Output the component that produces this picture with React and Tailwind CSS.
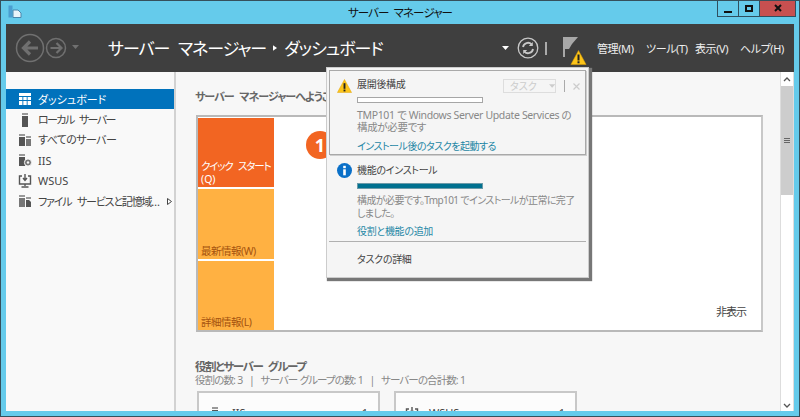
import React from "react";

const Warn = ({ cls }) => (
  <svg viewBox="0 0 16 15" className={cls}>
    <path d="M8 .5 15.6 14.5H.4Z" fill="#fcc419" stroke="#e0a000" strokeWidth="0.5" />
    <rect x="7" y="4.5" width="2" height="6" fill="#222" />
    <rect x="7" y="11.3" width="2" height="2" fill="#222" />
  </svg>
);

const SideIcon = ({ kind }) => {
  const c = kind === "dash" ? "#ffffff" : "#555555";
  return (
    <svg viewBox="0 0 14 14" className="w-[14px] h-[14px] shrink-0">
      {kind === "dash" && (
        <g fill={c}>
          <rect x="1" y="1" width="12" height="3" />
          <rect x="1" y="5" width="3.4" height="3" />
          <rect x="5.3" y="5" width="3.4" height="3" />
          <rect x="9.6" y="5" width="3.4" height="3" />
          <rect x="1" y="9" width="3.4" height="4" />
          <rect x="5.3" y="9" width="3.4" height="4" />
          <rect x="9.6" y="9" width="3.4" height="4" />
        </g>
      )}
      {kind === "local" && (
        <g fill={c}>
          <rect x="4" y="0" width="6" height="2" fill="#999" />
          <rect x="4" y="3" width="6" height="11" />
        </g>
      )}
      {kind === "all" && (
        <g>
          <rect x="1" y="1" width="6" height="2" fill="#999" />
          <rect x="1" y="4" width="6" height="9" fill={c} />
          <rect x="8" y="3" width="5" height="2" fill="#999" />
          <rect x="8" y="6" width="5" height="7" fill="#777" />
        </g>
      )}
      {kind === "iis" && (
        <g>
          <rect x="1" y="1" width="6" height="2" fill="#999" />
          <rect x="1" y="4" width="6" height="9" fill={c} />
          <circle cx="10" cy="9.5" r="3.6" fill="#777" stroke="#f9f9f9" />
          <circle cx="10" cy="9.5" r="1.2" fill="#f9f9f9" />
        </g>
      )}
      {kind === "wsus" && (
        <g fill="none" stroke={c} strokeWidth="1.4">
          <path d="M4 2H1.5v8h11V2H10" />
          <path d="M7 0v6M5 4l2 2.4L9 4" />
          <path d="M7 10v2M3.5 13h7" />
        </g>
      )}
      {kind === "file" && (
        <g>
          <rect x="1" y="1" width="6" height="2" fill="#999" />
          <rect x="1" y="4" width="6" height="9" fill="#777" />
          <rect x="8" y="3" width="5" height="2" fill="#999" />
          <path d="M8 6h3l2 2v5H8Z" fill={c} />
        </g>
      )}
    </svg>
  );
};

const navItems = [
  ["dash", "ダッシュボード", "tracking-[0px]", true],
  ["local", "ローカル サーバー", "tracking-[-1.6px] [word-spacing:4px]"],
  ["all", "すべてのサーバー", "tracking-[-0.6px]"],
  ["iis", "IIS", "tracking-[0px]"],
  ["wsus", "WSUS", "tracking-[0px]"],
  ["file", "ファイル サービスと記憶域…", "tracking-[-1.2px] [word-spacing:4px]"],
];

export default function App() {
  return (
    <div className="relative w-[800px] h-[417px] overflow-hidden flex flex-col bg-[#65cbeb] border border-[#35505c] font-['Noto_Sans','Noto_Sans_CJK_JP',sans-serif] [font-feature-settings:'palt']">
      {/* title bar */}
      <div className="h-[23px] shrink-0 relative flex items-center justify-center">
        <svg viewBox="0 0 14 13" className="absolute left-[7px] top-[4px] w-[14px] h-[13px]">
          <rect x="0.5" y="0.5" width="4" height="12" fill="#4a9ed0" />
          <path d="M5 5h5l3 3v4.5H5Z" fill="#e8f4fa" stroke="#4a86ac" />
        </svg>
        <span className="text-[11.5px] text-[#111] leading-none tracking-[-0.9px] [word-spacing:3px]">サーバー マネージャー</span>
        <div className="absolute top-[-1px] left-[716px] flex h-[17px] border border-t-0 border-[#2f4f5f]">
          <div className="w-[21px] border-r border-[#2f4f5f] flex items-end justify-center pb-[3px]">
            <div className="w-[8px] h-[2px] bg-[#111]" />
          </div>
          <div className="w-[20px] flex items-center justify-center">
            <div className="w-[8px] h-[7px] border-2 border-[#111]" />
          </div>
          <div className="w-[36px] bg-[#c75050] flex items-center justify-center border-l border-[#2f4f5f]">
            <svg viewBox="0 0 8 8" className="w-[8px] h-[8px]"><path d="M1 1l6 6M7 1l-6 6" stroke="#111" strokeWidth="2" /></svg>
          </div>
        </div>
      </div>

      <div className="mx-[5px] flex-1 flex flex-col min-h-0">
        {/* header */}
        <div className="h-[48px] shrink-0 bg-[#3f3f3f] flex items-center">
          <svg viewBox="0 0 76 32" className="ml-[8px] w-[76px] h-[32px] shrink-0">
            <g fill="none" stroke="#707070">
              <circle cx="16" cy="16" r="13.5" strokeWidth="1.5" />
              <circle cx="42" cy="16" r="9.5" strokeWidth="1.5" />
              <path d="M24 16H10M16 9.5 9.5 16l6.5 6.5" strokeWidth="3.2" />
              <path d="M36.5 16H47M42.5 11l5 5-5 5" strokeWidth="2.2" />
            </g>
            <path d="M58 13h7l-3.5 4Z" fill="#707070" />
          </svg>
          <div className="ml-[18px] flex items-center text-[17px] tracking-[-1px] [word-spacing:5px] text-white leading-none whitespace-nowrap">
            <span>サーバー マネージャー</span>
            <svg viewBox="0 0 5 7" className="w-[4px] h-[6px] mx-[7px]"><path d="M0 0l5 3.5L0 7Z" fill="#fff" /></svg>
            <span>ダッシュボード</span>
          </div>
          <div className="flex-1" />
          <svg viewBox="0 0 7 4" className="w-[7px] h-[4px] mr-[8px]"><path d="M0 0h7L3.5 4Z" fill="#fff" /></svg>
          <svg viewBox="0 0 22 22" className="w-[22px] h-[22px]">
            <circle cx="11" cy="11" r="9.8" fill="none" stroke="#c8c8c8" strokeWidth="1.3" />
            <path d="M6 10a5 5 0 0 1 8.6-2.6M16 12a5 5 0 0 1-8.6 2.6" fill="none" stroke="#c8c8c8" strokeWidth="1.8" />
            <path d="M15.8 5v4h-4ZM6.2 17v-4h4Z" fill="#c8c8c8" />
          </svg>
          <div className="ml-[6px] w-[2px] h-[13px] bg-[#aaaaaa]" />
          <div className="relative ml-[16px] mt-[6px] w-[24px] h-[28px]">
            <svg viewBox="0 0 15 20" className="absolute left-0 top-0 w-[15px] h-[20px]">
              <rect x="0" y="0" width="2" height="20" fill="#a8a8a8" />
              <path d="M2 0h13l-6 7 -3 5H2Z" fill="#a8a8a8" />
            </svg>
            <Warn cls="absolute left-[7px] top-[13px] w-[17px] h-[15px]" />
          </div>
          <div className="ml-[10px] mr-[17px] flex text-[11px] tracking-[-0.4px] text-[#eeeeee] leading-none whitespace-nowrap">
            <span className="w-[49px]">管理(M)</span>
            <span className="w-[49px]">ツール(T)</span>
            <span className="w-[45px]">表示(V)</span>
            <span className="w-[37px]">ヘルプ(H)</span>
          </div>
        </div>

        <div className="flex-1 flex min-h-0 overflow-hidden">
          {/* sidebar */}
          <div className="w-[170px] shrink-0 bg-[#f9f9f9] border-r-2 border-[#d2d2d2] pt-[17px]">
            {navItems.map(([k, t, tr, sel]) => (
              <div key={k} className={`h-[20.4px] flex items-center pl-[12px] text-[11px] leading-none whitespace-nowrap ${tr} ${sel ? "bg-[#0072bc] text-white" : "text-[#444444]"}`}>
                <SideIcon kind={k} />
                <span className="ml-[6px]">{t}</span>
                {k === "file" && (
                  <svg viewBox="0 0 5 7" className="w-[5px] h-[7px] ml-[8px]"><path d="M.5.5l4 3-4 3Z" fill="#fff" stroke="#444" /></svg>
                )}
              </div>
            ))}
          </div>

          {/* content */}
          <div className="flex-1 min-w-0 bg-[#f7f7f7] pl-[19px] pt-[18px] overflow-hidden">
            <div className="h-[14px] text-[11px] tracking-[-1px] [word-spacing:4px] font-bold text-[#666666] leading-[14px] whitespace-nowrap">サーバー マネージャーへようこそ</div>
            <div className="mt-[11px] ml-[1px] w-[567px] h-[217px] border-2 border-[#b9b9b9] border-r-[#c8c8c8] bg-white flex">
              <div className="w-[76px] flex flex-col shrink-0 gap-[2px] pt-[1px]">
                <div className="h-[70px] bg-[#f26522] text-white text-[10.5px] tracking-[-1.2px] [word-spacing:4px] leading-[13px] px-[3px] pb-[1px] flex flex-col justify-end whitespace-nowrap">
                  <span>クイック スタート</span>
                  <span className="tracking-[0px]">(Q)</span>
                </div>
                <div className="h-[70px] bg-[#ffb142] text-[#a5530f] text-[10.5px] tracking-[-0.5px] leading-[13px] px-[3px] pb-[1px] flex flex-col justify-end whitespace-nowrap">
                  <span>最新情報(W)</span>
                </div>
                <div className="h-[70px] bg-[#ffb142] text-[#a5530f] text-[10.5px] tracking-[-0.5px] leading-[13px] px-[3px] pb-[1px] flex flex-col justify-end whitespace-nowrap">
                  <span>詳細情報(L)</span>
                </div>
              </div>
              <div className="flex-1 flex flex-col pl-[32px] pt-[14px] pr-[15px] pb-[13px]">
                <div className="w-[28px] h-[28px] rounded-full bg-[#f26522] text-white text-[18px] font-bold flex items-center justify-center leading-none">1</div>
                <div className="flex-1" />
                <div className="self-end text-[11px] tracking-[-1px] text-[#444444] leading-none">非表示</div>
              </div>
            </div>
            <div className="mt-[28px] text-[11.5px] tracking-[-1.4px] [word-spacing:4px] font-bold text-[#666666] leading-[14px] whitespace-nowrap">役割とサーバー グループ</div>
            <div className="text-[10.5px] tracking-[-0.9px] [word-spacing:0.4px] text-[#888888] leading-[13px] whitespace-pre">{"役割の数: 3   |   サーバー グループの数: 1   |   サーバーの合計数: 1"}</div>
            <div className="mt-[4px] ml-[2px] flex gap-[14px]">
              {[["IIS", "local"], ["WSUS", "wsus"]].map(([n, k]) => (
                <div key={n} className="w-[183px] h-[40px] shrink-0 border-2 border-[#c8c8c8] bg-[#fcfcfc] flex items-start pl-[9px] pr-[10px] pt-[14px] text-[11px] text-[#444444] leading-none">
                  <SideIcon kind={k} />
                  <span className="ml-[10px] flex-1">{n}</span>
                  <span>1</span>
                </div>
              ))}
            </div>
          </div>

          {/* scrollbar */}
          <div className="w-[14px] shrink-0 bg-white border-x border-[#dddddd] flex flex-col">
            <div className="h-[14px] flex items-center justify-center">
              <svg viewBox="0 0 8 5" className="w-[8px] h-[5px]"><path d="M1 4l3-3 3 3" fill="none" stroke="#555" strokeWidth="1.3" /></svg>
            </div>
            <div className="h-[109px] bg-[#cdcdcd] flex flex-col items-center justify-center gap-[1px]">
              <div className="w-[6px] h-px bg-[#666]" />
              <div className="w-[6px] h-px bg-[#666]" />
              <div className="w-[6px] h-px bg-[#666]" />
            </div>
            <div className="flex-1" />
            <div className="h-[12px] flex items-center justify-center">
              <svg viewBox="0 0 8 5" className="w-[8px] h-[5px]"><path d="M1 1l3 3 3-3" fill="none" stroke="#555" strokeWidth="1.3" /></svg>
            </div>
          </div>
        </div>
      </div>
      <div className="h-[5px] shrink-0" />

      {/* notifications popup */}
      <div className="absolute left-[325px] top-[66px] w-[263px] h-[211px] bg-[#f5f5f5] border border-[#cccccc] shadow-[2px_2px_1px_1px_#777777] p-[2px] flex flex-col">
        <div className="relative h-[85px] shrink-0 border border-[#a9a9a9] shadow-[1px_1px_0_#cfcfcf] pl-[27px] pt-[6px]">
          <Warn cls="absolute left-[7px] top-[8px] w-[15px] h-[14px]" />
          <div className="text-[10px] tracking-[-0.3px] text-[#444444] leading-[14px]">展開後構成</div>
          <div className="mt-[6px] w-[126px] h-[6px] border border-[#a6a6a6] bg-white" />
          <div className="mt-[6px] text-[10.5px] tracking-[-0.35px] text-[#888888] leading-[12px] whitespace-nowrap">TMP101 で Windows Server Update Services の<br />構成が必要です</div>
          <div className="mt-[6px] text-[10px] tracking-[-0.5px] text-[#1e87a5] leading-[14px] whitespace-nowrap">インストール後のタスクを起動する</div>
          <div className="absolute left-[173px] top-[8px] w-[53px] h-[14px] border border-[#dddddd] flex items-center pl-[6px] text-[10px] text-[#cccccc] leading-none whitespace-nowrap">
            タスク
            <svg viewBox="0 0 7 4" className="ml-[12px] w-[7px] h-[4px]"><path d="M0 0h7L3.5 4Z" fill="#cccccc" /></svg>
          </div>
          <div className="absolute left-[234px] top-[9px] w-px h-[12px] bg-[#aaaaaa]" />
          <svg viewBox="0 0 7 7" className="absolute left-[243px] top-[12px] w-[7px] h-[7px]"><path d="M.5.5l6 6M6.5.5l-6 6" stroke="#cccccc" strokeWidth="1.2" /></svg>
        </div>
        <div className="relative h-[86px] shrink-0 pl-[28px] pt-[8px]">
          <svg viewBox="0 0 15 15" className="absolute left-[8px] top-[8px] w-[15px] h-[15px]">
            <circle cx="7.5" cy="7.5" r="7.5" fill="#0a70c8" />
            <rect x="6.2" y="6.3" width="2.6" height="6" fill="#fff" />
            <rect x="6.2" y="2.8" width="2.6" height="2.4" fill="#fff" />
          </svg>
          <div className="text-[10px] tracking-[-0.3px] text-[#444444] leading-[14px] whitespace-nowrap">機能のインストール</div>
          <div className="mt-[6px] w-[126px] h-[6px] bg-[#00708f] border border-[#6a9aa8]" />
          <div className="mt-[5px] text-[10px] tracking-[-0.6px] text-[#888888] leading-[13px] whitespace-nowrap">構成が必要です。Tmp101 でインストールが正常に完了<br />しました。</div>
          <div className="mt-[4px] text-[10px] tracking-[-0.3px] text-[#1e87a5] leading-[14px] whitespace-nowrap">役割と機能の追加</div>
        </div>
        <div className="h-px shrink-0 bg-[#b0b0b0]" />
        <div className="pl-[28px] pt-[10px] text-[10px] tracking-[-0.3px] text-[#444444] leading-[14px] whitespace-nowrap">タスクの詳細</div>
      </div>
    </div>
  );
}
